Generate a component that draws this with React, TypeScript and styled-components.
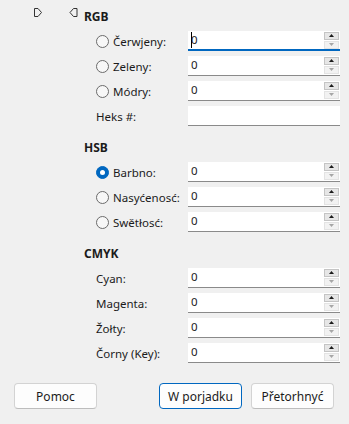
import styled, { createGlobalStyle } from "styled-components";

const GlobalStyle = createGlobalStyle`
  html, body {
    margin: 0;
    padding: 0;
    background: #f0f0f0;
  }
  body {
    font-family: "Noto Sans", "Open Sans", sans-serif;
    font-size: 11.5px;
    color: #1b1b1b;
  }
`;

const StPage = styled.div`
  display: flex;
  flex-direction: column;
  width: 349px;
  height: 424px;
  box-sizing: border-box;
`;

const StTop = styled.div`
  display: flex;
`;

const StSliderMarks = styled.div`
  display: flex;
  justify-content: space-between;
  align-items: flex-start;
  flex: 0 0 84px;
  box-sizing: border-box;
  padding: 8px 6px 0 34px;
`;

const StMark = styled.svg`
  display: block;
  flex-shrink: 0;
`;

const StForm = styled.div`
  display: flex;
  flex-direction: column;
  gap: 14px;
  padding-top: 9px;
  width: 256px;
`;

const StSection = styled.div`
  display: flex;
  flex-direction: column;
  gap: 5px;
`;

const StHeading = styled.div`
  font-weight: 700;
  font-size: 12px;
  line-height: 16px;
  height: 16px;
  margin-bottom: 1px;
`;

const StRow = styled.div`
  display: flex;
  align-items: center;
  height: 20px;
  padding-left: 12px;
`;

const StLabel = styled.label`
  display: flex;
  align-items: center;
  gap: 4px;
  width: 92px;
  white-space: nowrap;
`;

const StRadio = styled.span<{ $checked?: boolean }>`
  display: flex;
  align-items: center;
  justify-content: center;
  box-sizing: border-box;
  width: 13px;
  height: 13px;
  border-radius: 50%;
  border: 1px solid ${({ $checked }) => ($checked ? "#0067c0" : "#6b6b6b")};
  background: ${({ $checked }) => ($checked ? "#0067c0" : "#f7f7f7")};

  &::after {
    content: "";
    display: ${({ $checked }) => ($checked ? "block" : "none")};
    width: 5px;
    height: 5px;
    border-radius: 50%;
    background: #ffffff;
  }
`;

const StField = styled.div<{ $focused?: boolean }>`
  position: relative;
  display: flex;
  align-items: center;
  box-sizing: border-box;
  width: 152px;
  height: 20px;
  background: #ffffff;
  border-bottom: ${({ $focused }) =>
    $focused ? "2px solid #0067c0" : "1px solid #8a8a8a"};
  padding: ${({ $focused }) => ($focused ? "0 1px 0 3px" : "0 1px 1px 3px")};
`;

const StValue = styled.span`
  flex: 1;
  line-height: 16px;
`;

const StCaret = styled.span`
  position: absolute;
  left: 3px;
  top: 1px;
  width: 1px;
  height: 16px;
  background: #000;
`;

const StSpin = styled.div`
  display: flex;
  flex-direction: column;
  gap: 1px;
  width: 15px;
`;

const StSpinButton = styled.span<{ $disabled?: boolean }>`
  display: flex;
  align-items: center;
  justify-content: center;
  box-sizing: border-box;
  height: 8px;
  border: 1px solid ${({ $disabled }) => ($disabled ? "#e3e3e3" : "#c4c4c4")};
  background: ${({ $disabled }) => ($disabled ? "#f2f2f2" : "#e6e6e6")};
  color: ${({ $disabled }) => ($disabled ? "#a6a6a6" : "#1b1b1b")};
`;

const StFooter = styled.div`
  display: flex;
  justify-content: space-between;
  padding: 0 15px 0 14px;
  margin-top: 20px;
`;

const StButtonGroup = styled.div`
  display: flex;
  gap: 9px;
`;

const StButton = styled.button<{ $primary?: boolean }>`
  width: 83px;
  height: 26px;
  box-sizing: border-box;
  border-radius: 4px;
  background: #fdfdfd;
  border: 1px solid ${({ $primary }) => ($primary ? "#0067c0" : "#d3d3d3")};
  border-bottom-color: ${({ $primary }) => ($primary ? "#0067c0" : "#bdbdbd")};
  font-family: inherit;
  font-size: 12px;
  color: #1b1b1b;
  padding: 0;
`;

const MarkRight = () => (
  <StMark width="9" height="10" viewBox="0 0 9 10">
    <path d="M0.5 0.5 H4 L7.5 4.5 L4 8.5 H0.5 Z" fill="none" stroke="#333" />
  </StMark>
);

const MarkLeft = () => (
  <StMark width="9" height="10" viewBox="0 0 9 10">
    <path d="M8 0.5 H4.5 L1 4.5 L4.5 8.5 H8 Z" fill="none" stroke="#333" />
  </StMark>
);

const Triangle = ({ up }: { up: boolean }) => (
  <svg width="5" height="3" viewBox="0 0 5 3">
    <path d={up ? "M0 3 L2.5 0 L5 3 Z" : "M0 0 L2.5 3 L5 0 Z"} fill="currentColor" />
  </svg>
);

type RowData = {
  label: string;
  radio?: boolean;
  checked?: boolean;
  value: string;
  spin?: boolean;
  focused?: boolean;
};

const sections: { title: string; rows: RowData[] }[] = [
  {
    title: "RGB",
    rows: [
      { label: "Čerwjeny:", radio: true, value: "0", spin: true, focused: true },
      { label: "Zeleny:", radio: true, value: "0", spin: true },
      { label: "Módry:", radio: true, value: "0", spin: true },
      { label: "Heks #:", value: "" },
    ],
  },
  {
    title: "HSB",
    rows: [
      { label: "Barbno:", radio: true, checked: true, value: "0", spin: true },
      { label: "Nasyćenosć:", radio: true, value: "0", spin: true },
      { label: "Swětłosć:", radio: true, value: "0", spin: true },
    ],
  },
  {
    title: "CMYK",
    rows: [
      { label: "Cyan:", value: "0", spin: true },
      { label: "Magenta:", value: "0", spin: true },
      { label: "Žołty:", value: "0", spin: true },
      { label: "Čorny (Key):", value: "0", spin: true },
    ],
  },
];

const App = () => {
  return (
    <>
      <GlobalStyle />
      <StPage>
        <StTop>
          <StSliderMarks>
            <MarkRight />
            <MarkLeft />
          </StSliderMarks>
          <StForm>
            {sections.map((section) => (
              <StSection key={section.title}>
                <StHeading>{section.title}</StHeading>
                {section.rows.map((row) => (
                  <StRow key={row.label}>
                    <StLabel>
                      {row.radio && <StRadio $checked={row.checked} />}
                      {row.label}
                    </StLabel>
                    <StField $focused={row.focused}>
                      {row.focused && <StCaret />}
                      <StValue>{row.value}</StValue>
                      {row.spin && (
                        <StSpin>
                          <StSpinButton>
                            <Triangle up />
                          </StSpinButton>
                          <StSpinButton $disabled>
                            <Triangle up={false} />
                          </StSpinButton>
                        </StSpin>
                      )}
                    </StField>
                  </StRow>
                ))}
              </StSection>
            ))}
          </StForm>
        </StTop>
        <StFooter>
          <StButton>Pomoc</StButton>
          <StButtonGroup>
            <StButton $primary>W porjadku</StButton>
            <StButton>Přetorhnyć</StButton>
          </StButtonGroup>
        </StFooter>
      </StPage>
    </>
  );
};

export default App;
